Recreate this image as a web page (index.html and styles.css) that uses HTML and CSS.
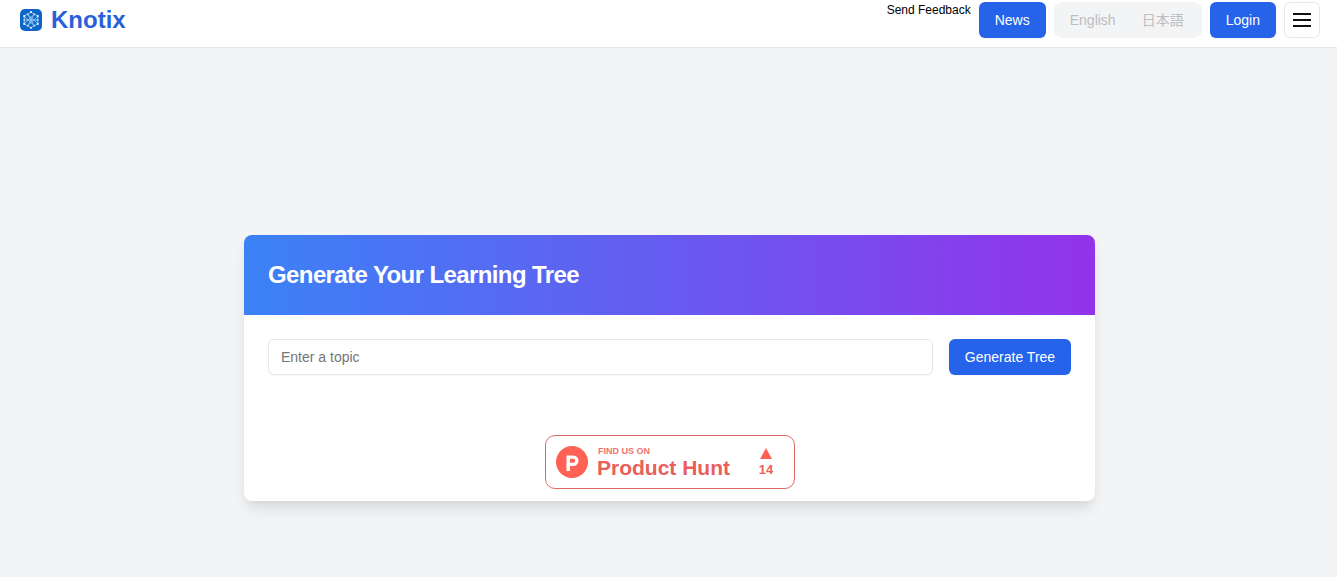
FILE: index.html
```html
<!DOCTYPE html>
<html lang="en">
<head>
<meta charset="utf-8">
<title>Knotix</title>
<link rel="stylesheet" href="styles.css">
</head>
<body>
<header class="topbar">
  <a class="brand" href="#">
    <svg class="brand-icon" width="22" height="22" viewBox="0 0 22 22" fill="none">
      <rect width="22" height="22" rx="5" fill="#0b66c8"/>
      <g stroke="#a9d6fa" stroke-width=".8">
        <path d="M11 3.2 17.8 7.1V14.9L11 18.8 4.2 14.9V7.1Z"/>
        <path d="M7.6 5.2 14.4 16.8M14.4 5.2 7.6 16.8M4.2 11H17.8"/>
        <path d="M4.2 7.1 14.4 16.8M17.8 7.1 7.6 16.8M4.2 14.9 14.4 5.2M17.8 14.9 7.6 5.2"/>
      </g>
      <g fill="#e6f4ff">
        <circle cx="11" cy="3.2" r="1.1"/><circle cx="11" cy="18.8" r="1.1"/>
        <circle cx="4.2" cy="7.1" r="1.1"/><circle cx="17.8" cy="7.1" r="1.1"/>
        <circle cx="4.2" cy="14.9" r="1.1"/><circle cx="17.8" cy="14.9" r="1.1"/>
        <circle cx="7.6" cy="5.2" r=".8"/><circle cx="14.4" cy="5.2" r=".8"/>
        <circle cx="7.6" cy="16.8" r=".8"/><circle cx="14.4" cy="16.8" r=".8"/>
        <circle cx="4.2" cy="11" r=".8"/><circle cx="17.8" cy="11" r=".8"/>
      </g>
    </svg>
    <span class="brand-name">Knotix</span>
  </a>
  <nav class="actions">
    <a class="feedback" href="#">Send Feedback</a>
    <button class="btn btn-news">News</button>
    <div class="lang">
      <span class="lang-item lang-en">English</span>
      <span class="lang-item lang-ja">日本語</span>
    </div>
    <button class="btn btn-login">Login</button>
    <button class="menu" aria-label="Menu">
      <span class="menu-line"></span><span class="menu-line"></span><span class="menu-line"></span>
    </button>
  </nav>
</header>
<main class="page">
  <section class="card">
    <div class="card-head">
      <h1 class="card-title">Generate Your Learning Tree</h1>
    </div>
    <div class="card-body">
      <form class="topic-form">
        <input class="topic-input" type="text" placeholder="Enter a topic">
        <button class="btn btn-generate" type="button">Generate Tree</button>
      </form>
      <div class="badge-row">
        <a class="ph-badge" href="#">
          <svg class="ph-logo" width="32" height="32" viewBox="0 0 32 32">
            <circle cx="16" cy="16" r="16" fill="#ff6154"/>
            <path fill="#fff" fill-rule="evenodd" d="M10.5 9.5h6.8a5.2 5.2 0 0 1 0 10.4H14V25h-3.5ZM14 12.7v4h3.2a2 2 0 0 0 0-4Z"/>
          </svg>
          <span class="ph-text">
            <span class="ph-small">FIND US ON</span>
            <span class="ph-name">Product Hunt</span>
          </span>
          <span class="ph-votes">
            <span class="ph-arrow"></span>
            <span class="ph-count">14</span>
          </span>
        </a>
      </div>
    </div>
  </section>
</main>
</body>
</html>
```

FILE: styles.css
```css
* { box-sizing: border-box; }
html, body { margin: 0; height: 100%; }
body {
  background: #f3f4f6;
  font-family: "Liberation Sans", Arial, "Noto Sans CJK JP", sans-serif;
  overflow: hidden;
}
button { font-family: inherit; cursor: pointer; }
a { text-decoration: none; }

.topbar {
  height: 48px;
  background: #fff;
  border-bottom: 1px solid #e5e7eb;
  display: flex;
  justify-content: space-between;
  padding: 2px 17px 0 20px;
}
.brand { display: flex; align-items: center; gap: 9px; height: 36px; }
.brand-icon { display: block; }
.brand-name { font-size: 24px; font-weight: 700; color: #2a5fdc; line-height: 36px; }

.actions { display: flex; align-items: flex-start; gap: 8px; }
.feedback { font-size: 12px; color: #000; line-height: 16px; }
.btn {
  border: 0;
  background: #2563eb;
  color: #fff;
  font-size: 14px;
  border-radius: 6px;
  height: 36px;
  padding: 0 16px;
  box-shadow: 0 1px 2px rgba(0, 0, 0, .05);
}
.lang {
  width: 148px;
  height: 36px;
  background: #f3f4f6;
  border-radius: 8px;
  display: flex;
  align-items: center;
  padding-left: 16px;
  font-size: 14px;
  color: #bdbdbd;
}
.lang-ja { margin: 0 0 2px 26px; }
.menu {
  width: 36px;
  height: 36px;
  background: #fff;
  border: 1px solid #e5e7eb;
  border-radius: 6px;
  padding: 0;
  display: flex;
  flex-direction: column;
  align-items: center;
  justify-content: center;
  gap: 4px;
}
.menu-line { display: block; width: 18px; height: 2px; background: #111; }

.page { padding: 187px 242px 0 244px; }
.card {
  width: 851px;
  height: 266px;
  background: #fff;
  border-radius: 8px;
  box-shadow: 0 10px 15px -3px rgba(0, 0, 0, .1), 0 4px 6px -2px rgba(0, 0, 0, .05);
  overflow: hidden;
}
.card-head {
  height: 80px;
  padding: 0 24px;
  display: flex;
  align-items: center;
  background: linear-gradient(to right, #3b82f6, #9333ea);
}
.card-title { margin: 0; font-size: 24px; font-weight: 700; color: #fff; letter-spacing: -.6px; }
.card-body { padding: 24px 24px 0; }
.topic-form { display: flex; gap: 16px; }
.topic-input {
  flex: 1;
  min-width: 0;
  height: 36px;
  border: 1px solid #e5e7eb;
  border-radius: 6px;
  padding: 0 12px;
  font: 14px "Liberation Sans", Arial, sans-serif;
  box-shadow: 0 1px 2px rgba(0, 0, 0, .05);
}
.topic-input::placeholder { color: #757575; opacity: 1; }
.btn-generate { width: 122px; padding: 0; }

.badge-row { display: flex; justify-content: center; margin-top: 60px; padding-left: 1px; }
.ph-badge {
  width: 250px;
  height: 54px;
  border: 1px solid #e06a68;
  border-radius: 10px;
  background: #fff;
  color: #e9605a;
  display: flex;
  align-items: center;
  padding-left: 10px;
}
.ph-logo { display: block; flex: none; }
.ph-text { display: flex; flex-direction: column; margin-left: 9px; padding-top: 2px; width: 159px; }
.ph-small { font-size: 9px; font-weight: 700; line-height: 10px; margin-left: 1px; color: #ec7570; }
.ph-name { font-size: 21px; font-weight: 700; line-height: 24px; }
.ph-votes { display: flex; flex-direction: column; align-items: center; width: 20px; }
.ph-arrow {
  width: 0;
  height: 0;
  border-left: 6px solid transparent;
  border-right: 6px solid transparent;
  border-bottom: 11px solid #ff6154;
  margin-bottom: 3px;
}
.ph-count { font-size: 13px; font-weight: 700; line-height: 15px; }
```
